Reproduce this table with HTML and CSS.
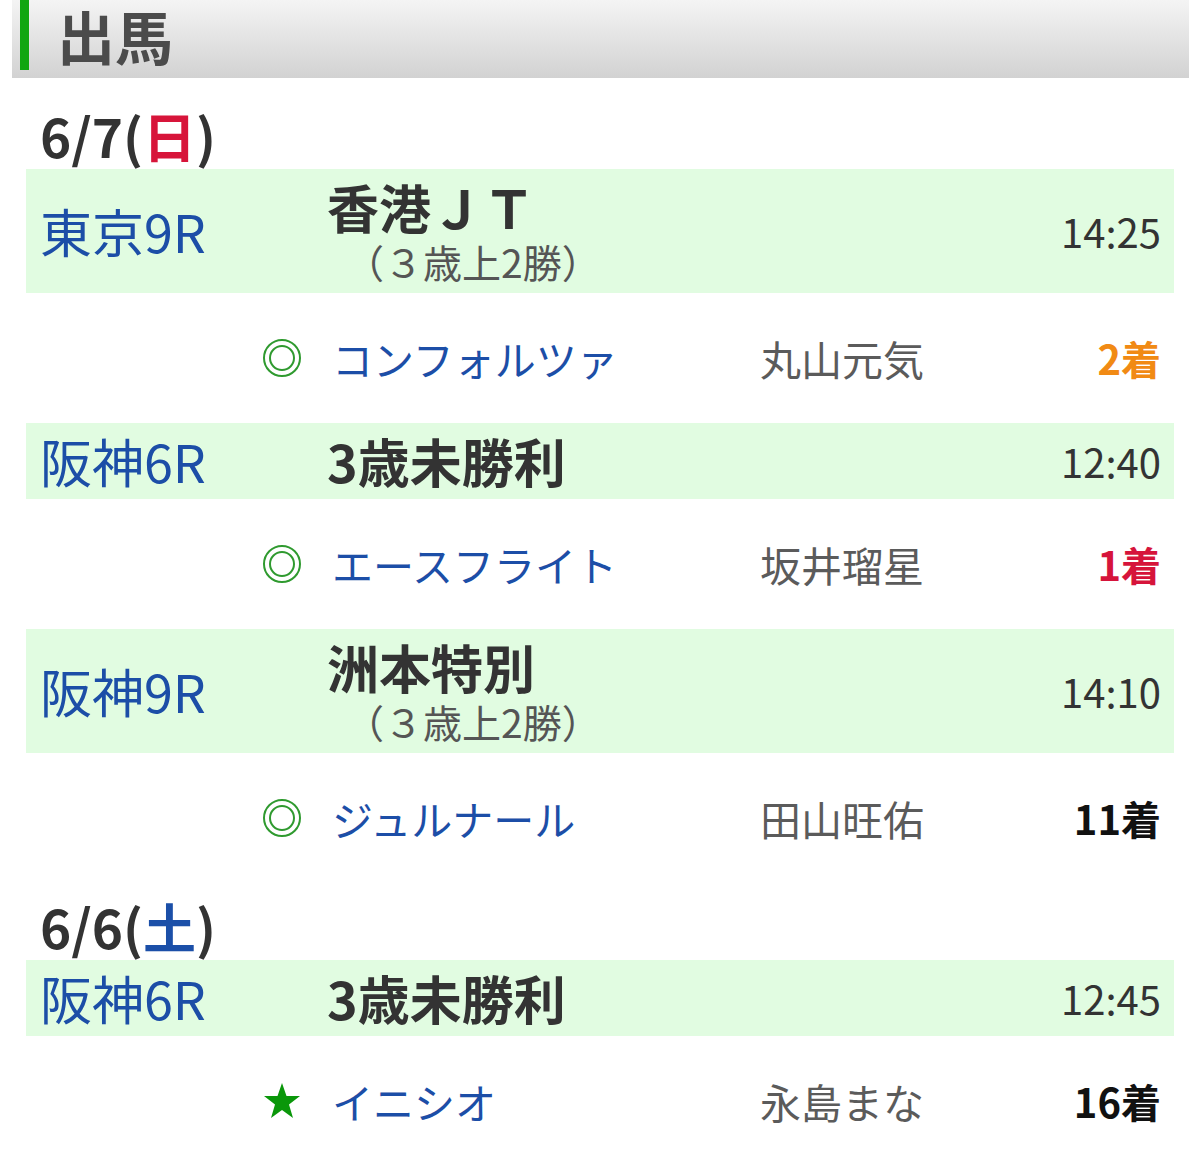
FILE: index.html
```html
<!DOCTYPE html>
<html lang="ja">
<head>
<meta charset="utf-8">
<title>出馬</title>
<link rel="stylesheet" href="styles.css">
</head>
<body>
<header class="head">
  <h1 class="head-title">出馬</h1>
</header>

<main class="list">
  <div class="date date-first">6/7(<span class="sun">日</span>)</div>

  <div class="race">
    <div class="venue">東京9R</div>
    <div class="race-name">
      <div class="name">香港ＪＴ</div>
      <div class="sub">（３歳上2勝）</div>
    </div>
    <div class="time">14:25</div>
  </div>
  <div class="horse">
    <div class="mark"><svg viewBox="0 0 40 40" width="40" height="40"><circle cx="20" cy="20" r="18" fill="none" stroke="#2f9a2f" stroke-width="2"/><circle cx="20" cy="20" r="12" fill="none" stroke="#2f9a2f" stroke-width="2"/></svg></div>
    <div class="hname">コンフォルツァ</div>
    <div class="jockey">丸山元気</div>
    <div class="result r2">2着</div>
  </div>

  <div class="race">
    <div class="venue">阪神6R</div>
    <div class="race-name">
      <div class="name">3歳未勝利</div>
    </div>
    <div class="time">12:40</div>
  </div>
  <div class="horse">
    <div class="mark"><svg viewBox="0 0 40 40" width="40" height="40"><circle cx="20" cy="20" r="18" fill="none" stroke="#2f9a2f" stroke-width="2"/><circle cx="20" cy="20" r="12" fill="none" stroke="#2f9a2f" stroke-width="2"/></svg></div>
    <div class="hname">エースフライト</div>
    <div class="jockey">坂井瑠星</div>
    <div class="result r1">1着</div>
  </div>

  <div class="race">
    <div class="venue">阪神9R</div>
    <div class="race-name">
      <div class="name">洲本特別</div>
      <div class="sub">（３歳上2勝）</div>
    </div>
    <div class="time">14:10</div>
  </div>
  <div class="horse">
    <div class="mark"><svg viewBox="0 0 40 40" width="40" height="40"><circle cx="20" cy="20" r="18" fill="none" stroke="#2f9a2f" stroke-width="2"/><circle cx="20" cy="20" r="12" fill="none" stroke="#2f9a2f" stroke-width="2"/></svg></div>
    <div class="hname">ジュルナール</div>
    <div class="jockey">田山旺佑</div>
    <div class="result">11着</div>
  </div>

  <div class="date">6/6(<span class="sat">土</span>)</div>

  <div class="race">
    <div class="venue">阪神6R</div>
    <div class="race-name">
      <div class="name">3歳未勝利</div>
    </div>
    <div class="time">12:45</div>
  </div>
  <div class="horse">
    <div class="mark"><svg viewBox="0 0 40 40" width="40" height="40"><polygon points="20,2 24.5,15 38,15 27,23.5 31,37 20,29 9,37 13,23.5 2,15 15.5,15" fill="#0a970a"/></svg></div>
    <div class="hname">イニシオ</div>
    <div class="jockey">永島まな</div>
    <div class="result">16着</div>
  </div>
</main>
</body>
</html>
```

FILE: styles.css
```css
html, body {
  margin: 0;
  padding: 0;
  background: #ffffff;
}

body {
  font-family: "Noto Sans CJK JP", "Noto Sans", sans-serif;
  color: #333333;
}

.head {
  margin: 0 11px 0 12px;
  height: 78px;
  background: linear-gradient(to bottom, #f4f4f4 0%, #d2d2d2 100%);
  box-sizing: border-box;
}

.head-title {
  margin: 0 0 0 8px;
  height: 70px;
  border-left: 9px solid #11a611;
  padding-left: 28px;
  font-size: 58px;
  line-height: 70px;
  font-weight: 700;
  color: #4b4b4b;
}

.list {
  margin: 0 26px;
}

.date {
  padding: 10px 0 0 14px;
  height: 67px;
  font-size: 53px;
  line-height: 67px;
  font-weight: 700;
  color: #333333;
}

.date-first {
  margin-top: 14px;
}

.sun { color: #d7153a; }
.sat { color: #1b4fa8; }

.race {
  display: grid;
  grid-template-columns: 287px 1fr auto;
  align-items: center;
  background: #e1fce1;
  padding: 8px 13px 8px 14px;
}

.venue {
  font-size: 52px;
  line-height: 60px;
  color: #1c4ea7;
}

.name {
  font-size: 52px;
  line-height: 60px;
  font-weight: 700;
  color: #333333;
}

.sub {
  font-size: 39px;
  line-height: 48px;
  color: #555555;
  margin-left: 18px;
}

.time {
  font-size: 40px;
  line-height: 60px;
  color: #333333;
}

.horse {
  display: grid;
  grid-template-columns: 70px 428px 1fr auto;
  align-items: center;
  height: 130px;
  padding: 0 13px 0 236px;
}

.mark {
  display: flex;
  align-items: center;
  height: 40px;
}

.mark svg {
  display: block;
}

.hname {
  font-size: 41px;
  color: #1c4ea7;
}

.jockey {
  font-size: 41px;
  color: #5b5b5b;
}

.result {
  font-size: 40px;
  font-weight: 700;
  color: #111111;
}

.r2 { color: #f18a14; }
.r1 { color: #d6143b; }
```
